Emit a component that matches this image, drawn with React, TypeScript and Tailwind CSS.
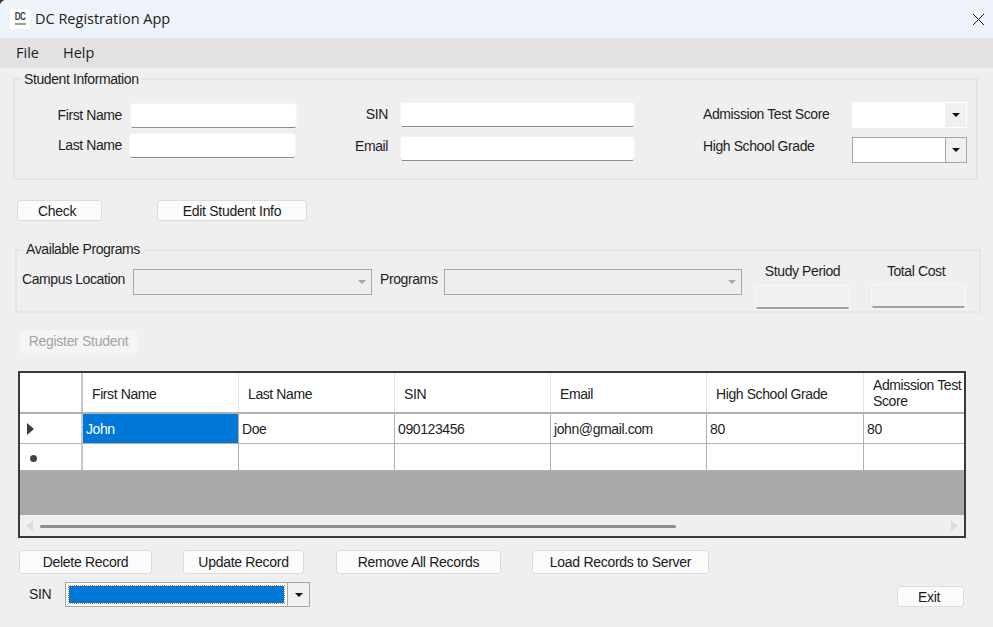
import React from "react";

const FONT = "font-['Liberation_Sans',Arial,sans-serif]";

const Caret = ({ color = "#111" }: { color?: string }) => (
  <svg width="8" height="4" viewBox="0 0 8 4">
    <path d="M0 0h8L4 4z" fill={color} />
  </svg>
);

const TextBox = ({ className }: { className: string }) => (
  <div
    className={`h-[24px] bg-white rounded-[2px] border-b border-b-[#8c8c8c] shadow-[0_0_0_1px_#f4f4f4] ${className}`}
  />
);

const ReadBox = ({ className }: { className: string }) => (
  <div
    className={`h-[23px] w-[93px] bg-[#f0f0f0] rounded-[2px] border-b-2 border-b-[#a0a0a0] shadow-[0_0_0_1px_#f8f8f8] ${className}`}
  />
);

const Combo = ({ flat, className }: { flat?: boolean; className: string }) => (
  <div
    className={`h-[26px] w-[115px] flex bg-white ${
      flat ? "border border-white" : "border border-[#a6a6a6]"
    } ${className}`}
  >
    <div className="flex-1" />
    <div
      className={`w-[21px] bg-[#f0f0f0] flex items-center justify-center ${
        flat ? "" : "border-l border-[#a6a6a6]"
      }`}
    >
      <Caret />
    </div>
  </div>
);

const DisabledCombo = ({ className }: { className: string }) => (
  <div
    className={`h-[26px] border border-[#a8a8a8] bg-[#efefef] flex items-center justify-end pr-[5px] ${className}`}
  >
    <Caret color="#a8a8a8" />
  </div>
);

const Btn = ({
  label,
  className,
  disabled,
}: {
  label: string;
  className: string;
  disabled?: boolean;
}) => (
  <button
    className={`flex items-center justify-center rounded-[3px] text-[14px] tracking-[-0.3px] ${
      disabled
        ? "bg-[#f5f5f5] text-[#a3a3a3]"
        : "bg-[#fbfbfb] border border-[#dcdcdc] text-[#1a1a1a]"
    } ${className}`}
  >
    {label}
  </button>
);

const COLS = "grid grid-cols-[63px_156px_156px_156px_156px_157px_99px]";
const HEADERS = ["First Name", "Last Name", "SIN", "Email", "High School Grade"];
const ROW = ["Doe", "090123456", "john@gmail.com", "80", "80"];

export default function App() {
  return (
    <div className={`w-[993px] h-[627px] bg-[#333] overflow-hidden ${FONT}`}>
      <div className="h-full bg-[#efefef] rounded-tl-[6px] overflow-hidden text-[14px] text-[#1e1e1e] tracking-[-0.4px]">
        {/* title bar */}
        <div className="h-[38px] bg-[#eef3f9] flex items-center pl-[10px] pr-[8px]">
          <div className="w-[20px] h-[20px] bg-white flex flex-col items-center pt-[2px]">
            <span className="text-[11px] leading-[11px] font-bold text-[#444] tracking-[-1px] scale-x-75">DC</span>
            <div className="w-[11px] h-[2px] mt-[1px] bg-[#8fa592]" />
          </div>
          <span className="ml-[5px] text-[14.5px] tracking-normal font-['Open_Sans',sans-serif] text-[#222]">
            DC Registration App
          </span>
          <svg className="ml-auto" width="13" height="13" viewBox="0 0 13 13">
            <path d="M1 1l11 11M12 1L1 12" stroke="#1a1a1a" strokeWidth="1" fill="none" />
          </svg>
        </div>

        {/* menu */}
        <div className="h-[30px] bg-[#e2e2e2] flex items-center pl-[16px] gap-[24px] text-[14.5px] tracking-normal font-['Open_Sans',sans-serif]">
          <span>File</span>
          <span>Help</span>
        </div>

        {/* student information */}
        <div className="ml-[13px] mt-[10px] w-[965px] h-[102px] border-2 border-[#e4e4e4] relative">
          <span className="absolute left-[7px] -top-[9px] px-[2px] bg-[#efefef] leading-[16px]">
            Student Information
          </span>
          <div className="flex">
            <div className="w-[281px] flex flex-col">
              <div className="flex items-start mt-[24px] h-[24px]">
                <span className="w-[107px] text-right leading-[20px] mt-[1px]">First Name</span>
                <TextBox className="ml-[9px] w-[165px]" />
              </div>
              <div className="flex items-start mt-[6px] h-[24px]">
                <span className="w-[107px] text-right leading-[20px] mt-[1px]">Last Name</span>
                <TextBox className="ml-[8px] w-[165px]" />
              </div>
            </div>
            <div className="w-[400px] flex flex-col">
              <div className="flex items-start mt-[23px] h-[24px]">
                <span className="w-[92px] text-right leading-[20px] mt-[1px]">SIN</span>
                <TextBox className="ml-[13px] w-[233px]" />
              </div>
              <div className="flex items-start mt-[10px] h-[24px]">
                <span className="w-[92px] text-right leading-[20px] -mt-[1px]">Email</span>
                <TextBox className="ml-[13px] w-[233px]" />
              </div>
            </div>
            <div className="flex flex-col pl-[7px]">
              <div className="flex items-start mt-[22px] h-[26px]">
                <span className="w-[149px] leading-[20px] mt-[2px]">Admission Test Score</span>
                <Combo flat className="" />
              </div>
              <div className="flex items-start mt-[9px] h-[26px]">
                <span className="w-[149px] leading-[20px] -mt-[1px]">High School Grade</span>
                <Combo className="" />
              </div>
            </div>
          </div>
        </div>

        <div className="flex mt-[20px] pl-[17px]">
          <Btn label="Check" className="w-[85px] h-[21px] pr-[5px] pt-[1px]" />
          <Btn label="Edit Student Info" className="w-[150px] h-[21px] ml-[55px] pt-[1px]" />
        </div>

        {/* available programs */}
        <div className="ml-[15px] mt-[28px] w-[966px] h-[64px] border-2 border-[#e6e6e6] relative">
          <span className="absolute left-[7px] -top-[10px] px-[2px] bg-[#efefef] leading-[16px]">
            Available Programs
          </span>
          <div className="flex items-start pl-[5px]">
            <span className="mt-[20px] w-[111px] leading-[16px]">Campus Location</span>
            <DisabledCombo className="mt-[18px] w-[239px]" />
            <span className="mt-[20px] ml-[8px] w-[64px] leading-[16px]">Programs</span>
            <DisabledCombo className="mt-[18px] w-[298px]" />
            <div className="ml-[14px] w-[93px] flex flex-col items-center mt-[12px]">
              <span className="leading-[16px] whitespace-nowrap">Study Period</span>
              <ReadBox className="mt-[7px]" />
            </div>
            <div className="ml-[23px] w-[93px] flex flex-col items-center mt-[12px]">
              <span className="leading-[16px] whitespace-nowrap pr-[5px]">Total Cost</span>
              <ReadBox className="mt-[6px]" />
            </div>
          </div>
        </div>

        <Btn label="Register Student" disabled className="ml-[20px] mt-[17px] w-[117px] h-[23px]" />

        {/* data grid */}
        <div className="ml-[18px] mt-[18px] w-[948px] h-[167px] border-2 border-[#3a3a3a] bg-[#a9a9a9] flex flex-col">
          <div className={`${COLS} h-[41px] shrink-0 bg-white border-b-2 border-[#b0b0b0] text-[#222]`}>
            <div className="border-r-2 border-[#c8c8c8]" />
            {HEADERS.map((h) => (
              <div key={h} className="border-r border-[#e6e6e6] flex items-center pl-[9px] pt-[3px]">
                {h}
              </div>
            ))}
            <div className="pl-[9px] pt-[4px] leading-[16px] whitespace-nowrap">
              Admission Test
              <br />
              Score
            </div>
          </div>
          <div className={`${COLS} h-[30px] shrink-0 bg-white border-b border-[#b0b0b0]`}>
            <div className="border-r-2 border-[#c8c8c8] flex items-center pl-[7px]">
              <svg width="8" height="12" viewBox="0 0 8 12">
                <path d="M0 0l7 6-7 6z" fill="#3c3c3c" />
              </svg>
            </div>
            <div className="bg-[#0078d7] text-white flex items-center pl-[3px] pt-[2px] border-r border-[#b0b0b0]">John</div>
            {ROW.map((v, i) => (
              <div key={i} className="border-r border-[#b0b0b0] last:border-r-0 flex items-center pl-[3px] pt-[2px]">
                {v}
              </div>
            ))}
          </div>
          <div className={`${COLS} h-[27px] shrink-0 bg-white border-b border-[#b0b0b0]`}>
            <div className="border-r-2 border-[#c8c8c8] flex items-center pl-[10px] pt-[3px]">
              <div className="w-[7px] h-[7px] rounded-full bg-[#444]" />
            </div>
            {ROW.concat("").map((_, i) => (
              <div key={i} className="border-r border-[#b0b0b0] last:border-r-0" />
            ))}
          </div>
          <div className="flex-1" />
          <div className="h-[21px] bg-[#efefef] flex items-center px-[6px] shrink-0">
            <svg width="8" height="10" viewBox="0 0 8 10">
              <path d="M7 0L0 5l7 5z" fill="#dcdcdc" />
            </svg>
            <div className="ml-[6px] w-[636px] h-[3px] rounded-full bg-[#8e8e8e] mt-[1px]" />
            <svg className="ml-auto" width="8" height="10" viewBox="0 0 8 10">
              <path d="M1 0l7 5-7 5z" fill="#dcdcdc" />
            </svg>
          </div>
        </div>

        <div className="flex mt-[12px] pl-[19px]">
          <Btn label="Delete Record" className="w-[133px] h-[24px]" />
          <Btn label="Update Record" className="w-[121px] h-[24px] ml-[31px]" />
          <Btn label="Remove All Records" className="w-[165px] h-[24px] ml-[32px]" />
          <Btn label="Load Records to Server" className="w-[177px] h-[24px] ml-[31px]" />
        </div>

        <div className="flex items-start mt-[8px] pl-[29px]">
          <span className="mt-[2px] w-[36px]">SIN</span>
          <div className="w-[245px] h-[25px] flex bg-white border border-[#a6a6a6]">
            <div className="flex-1 m-[3px] bg-[#0078d7] outline-1 outline-dotted outline-[#d98a2b]" />
            <div className="w-[22px] bg-[#f0f0f0] border-l border-[#a6a6a6] flex items-center justify-center">
              <Caret />
            </div>
          </div>
          <Btn label="Exit" className="w-[67px] h-[21px] ml-[587px] mt-[4px] pr-[3px] pt-[1px]" />
        </div>
      </div>
    </div>
  );
}
